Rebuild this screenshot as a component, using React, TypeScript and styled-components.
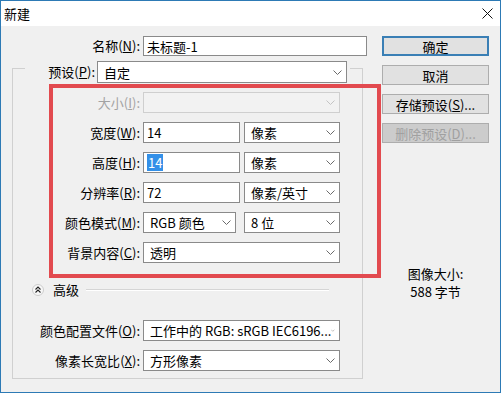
import React from "react";
import styled, { createGlobalStyle } from "styled-components";

const GlobalStyle = createGlobalStyle`
  body {
    margin: 0;
    font-family: "Noto Sans CJK SC", "Noto Sans", sans-serif;
    font-size: 13px;
    color: #000;
  }
`;

const Window = styled.div`
  width: 501px;
  height: 393px;
  box-sizing: border-box;
  border: 1px solid #2d7ab5;
  display: flex;
  flex-direction: column;
  background: #fff;
`;

const TitleBar = styled.div`
  height: 25px;
  display: flex;
  align-items: center;
  justify-content: space-between;
  padding: 0 7px 0 3px;
  background: #fff;
  line-height: 18px;
`;

const Body = styled.div`
  flex: 1;
  display: flex;
  position: relative;
  background: #f0f0f0;
`;

const MainColumn = styled.div`
  width: 370px;
  box-sizing: border-box;
  padding: 10px 0 0 11px;
`;

const SideColumn = styled.div`
  width: 107px;
  margin-left: 11px;
  padding-top: 10px;
  display: flex;
  flex-direction: column;
  gap: 9px;
`;

const Row = styled.div<{ $label: number; $top?: number }>`
  display: grid;
  grid-template-columns: ${(p) => p.$label}px auto;
  column-gap: 3px;
  align-items: center;
  margin-top: ${(p) => p.$top ?? 0}px;
`;

const Label = styled.span<{ $disabled?: boolean }>`
  text-align: right;
  white-space: nowrap;
  line-height: 18px;
  color: ${(p) => (p.$disabled ? "#a3a3a3" : "#000")};
`;

const Controls = styled.div<{ $gap?: number }>`
  display: flex;
  gap: ${(p) => p.$gap ?? 4}px;
`;

const TextBox = styled.div<{ $width: number; $height?: number }>`
  width: ${(p) => p.$width}px;
  height: ${(p) => p.$height ?? 21}px;
  box-sizing: border-box;
  border: 1px solid #8a8a8a;
  background: #fff;
  padding-left: 3px;
  display: flex;
  align-items: center;
  line-height: 17px;
  white-space: nowrap;
`;

const Selected = styled.span`
  background: #3390e8;
  color: #fff;
  padding: 0 1px;
`;

const Combo = styled.div<{ $width: number; $height?: number; $disabled?: boolean }>`
  width: ${(p) => p.$width}px;
  height: ${(p) => p.$height ?? 21}px;
  box-sizing: border-box;
  border: 1px solid ${(p) => (p.$disabled ? "#cfcfcf" : "#8a8a8a")};
  background: ${(p) => (p.$disabled ? "#f2f2f2" : "#fff")};
  padding: 0 4px 0 6px;
  display: flex;
  align-items: center;
  justify-content: space-between;
  line-height: 17px;
  white-space: nowrap;
  overflow: hidden;
`;

const Group = styled.div`
  width: 351px;
  box-sizing: border-box;
  margin-top: 12px;
  padding-bottom: 7px;
  border: 1px solid #d0d0d0;
`;

const PresetRow = styled.div`
  display: flex;
  align-items: center;
  width: fit-content;
  margin: -8px 0 0 12px;
  padding-right: 3px;
  background: #f0f0f0;
`;

const PresetLabel = styled(Label)`
  width: 70px;
  margin-right: 2px;
`;

const AdvancedRow = styled.div`
  display: flex;
  align-items: center;
  height: 16px;
  margin: 19px 33px 0 19px;
  line-height: 16px;
`;

const AdvancedText = styled.span`
  margin: 0 7px 0 9px;
`;

const Separator = styled.div`
  flex: 1;
  border-top: 1px solid #d5d5d5;
  border-bottom: 1px solid #fff;
`;

const Button = styled.div<{ $variant?: "default" | "disabled" }>`
  height: 20px;
  box-sizing: border-box;
  display: flex;
  align-items: center;
  justify-content: center;
  line-height: 17px;
  background: ${(p) => (p.$variant === "disabled" ? "#cccccc" : "#e1e1e1")};
  color: ${(p) => (p.$variant === "disabled" ? "#a0a0a0" : "#000")};
  border: ${(p) =>
    p.$variant === "default" ? "2px solid #3a7fb5" : "1px solid #adadad"};
`;

const ImageSize = styled.div`
  margin-top: 113px;
  text-align: center;
  line-height: 18px;
`;

const Annotation = styled.div`
  position: absolute;
  left: 48px;
  top: 58px;
  width: 332px;
  height: 194px;
  box-sizing: border-box;
  border: 4px solid #e24a4f;
  pointer-events: none;
`;

const Chevron = ({ light }: { light?: boolean }) => (
  <svg width="9" height="5" viewBox="0 0 9 5">
    <polyline
      points="0.5,0.5 4.5,4.5 8.5,0.5"
      fill="none"
      stroke={light ? "#c4c4c4" : "#6a6a6a"}
      strokeWidth="1"
    />
  </svg>
);

const CloseIcon = () => (
  <svg width="11" height="11" viewBox="0 0 11 11">
    <path d="M0.5 0.5 L10.5 10.5 M10.5 0.5 L0.5 10.5" stroke="#111" strokeWidth="1" />
  </svg>
);

const CollapseIcon = () => (
  <svg width="12" height="12" viewBox="0 0 12 12">
    <circle cx="6" cy="6" r="5.5" fill="#f7f7f7" stroke="#cdcdcd" />
    <path d="M3.5 5.5 L6 3 L8.5 5.5 M3.5 8.5 L6 6 L8.5 8.5" fill="none" stroke="#222" strokeWidth="1.1" />
  </svg>
);

type SelectProps = {
  width: number;
  value?: string;
  height?: number;
  disabled?: boolean;
};

const Select = ({ width, value, height, disabled }: SelectProps) => (
  <Combo $width={width} $height={height} $disabled={disabled}>
    <span>{value}</span>
    <Chevron light={disabled} />
  </Combo>
);

const Key = ({ text, k }: { text: string; k: string }) => (
  <>
    {text}(<u>{k}</u>):
  </>
);

const App: React.FC = () => {
  return (
    <>
      <GlobalStyle />
      <Window>
        <TitleBar>
          <span>新建</span>
          <CloseIcon />
        </TitleBar>
        <Body>
          <MainColumn>
            <Row $label={128}>
              <Label>
                <Key text="名称" k="N" />
              </Label>
              <TextBox $width={224} $height={20}>
                未标题-1
              </TextBox>
            </Row>

            <Group>
              <PresetRow>
                <PresetLabel>
                  <Key text="预设" k="P" />
                </PresetLabel>
                <Select width={250} height={22} value="自定" />
              </PresetRow>

              <Row $label={127} $top={9}>
                <Label $disabled>
                  <Key text="大小" k="I" />
                </Label>
                <Select width={197} disabled />
              </Row>
              <Row $label={127} $top={9}>
                <Label>
                  <Key text="宽度" k="W" />
                </Label>
                <Controls>
                  <TextBox $width={97}>14</TextBox>
                  <Select width={96} value="像素" />
                </Controls>
              </Row>
              <Row $label={127} $top={9}>
                <Label>
                  <Key text="高度" k="H" />
                </Label>
                <Controls>
                  <TextBox $width={97}>
                    <Selected>14</Selected>
                  </TextBox>
                  <Select width={96} value="像素" />
                </Controls>
              </Row>
              <Row $label={127} $top={9}>
                <Label>
                  <Key text="分辨率" k="R" />
                </Label>
                <Controls>
                  <TextBox $width={97}>72</TextBox>
                  <Select width={96} value="像素/英寸" />
                </Controls>
              </Row>
              <Row $label={127} $top={9}>
                <Label>
                  <Key text="颜色模式" k="M" />
                </Label>
                <Controls $gap={8}>
                  <Select width={93} value="RGB 颜色" />
                  <Select width={96} value="8 位" />
                </Controls>
              </Row>
              <Row $label={127} $top={9}>
                <Label>
                  <Key text="背景内容" k="C" />
                </Label>
                <Select width={197} value="透明" />
              </Row>

              <AdvancedRow>
                <CollapseIcon />
                <AdvancedText>高级</AdvancedText>
                <Separator />
              </AdvancedRow>

              <Row $label={127} $top={22}>
                <Label>
                  <Key text="颜色配置文件" k="O" />
                </Label>
                <Select width={197} value="工作中的 RGB: sRGB IEC6196..." />
              </Row>
              <Row $label={127} $top={9}>
                <Label>
                  <Key text="像素长宽比" k="X" />
                </Label>
                <Select width={197} value="方形像素" />
              </Row>
            </Group>
          </MainColumn>

          <SideColumn>
            <Button $variant="default">确定</Button>
            <Button>取消</Button>
            <Button>
              存储预设(<u>S</u>)...
            </Button>
            <Button $variant="disabled">
              删除预设(<u>D</u>)...
            </Button>
            <ImageSize>
              图像大小:
              <br />
              588 字节
            </ImageSize>
          </SideColumn>

          <Annotation />
        </Body>
      </Window>
    </>
  );
};

export default App;
